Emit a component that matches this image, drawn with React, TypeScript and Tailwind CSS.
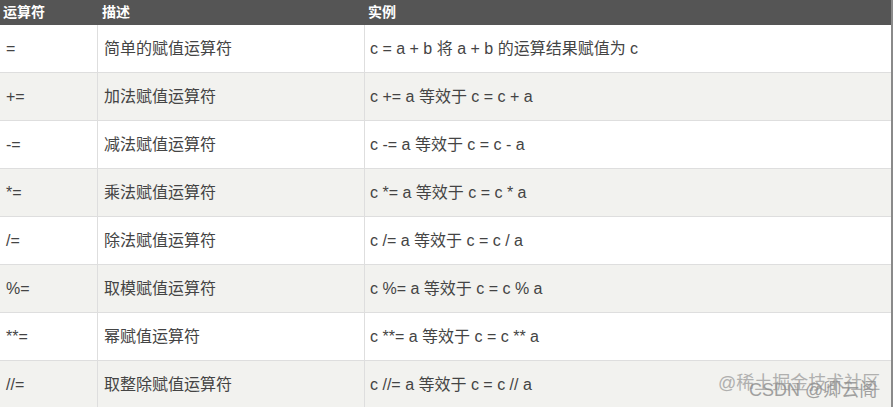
const rows = [
  { op: "=", desc: "简单的赋值运算符", ex: "c = a + b 将 a + b 的运算结果赋值为 c" },
  { op: "+=", desc: "加法赋值运算符", ex: "c += a 等效于 c = c + a" },
  { op: "-=", desc: "减法赋值运算符", ex: "c -= a 等效于 c = c - a" },
  { op: "*=", desc: "乘法赋值运算符", ex: "c *= a 等效于 c = c * a" },
  { op: "/=", desc: "除法赋值运算符", ex: "c /= a 等效于 c = c / a" },
  { op: "%=", desc: "取模赋值运算符", ex: "c %= a 等效于 c = c % a" },
  { op: "**=", desc: "幂赋值运算符", ex: "c **= a 等效于 c = c ** a" },
  { op: "//=", desc: "取整除赋值运算符", ex: "c //= a 等效于 c = c // a" },
];

const App = () => {
  return (
    <div className="relative w-[893px] h-[407px] overflow-hidden bg-white font-['Liberation_Sans','Noto_Sans_CJK_SC',sans-serif]">
      <div className="h-[407px] border-r-2 border-b-2 border-[#8a8a8a]">
        {/* Header */}
        <div className="grid grid-cols-[98px_267px_1fr] h-[25px] bg-[#555555] text-white font-bold text-[14px] items-center">
          <div className="pl-[3px]">运算符</div>
          <div className="pl-[4px]">描述</div>
          <div className="pl-[3px]">实例</div>
        </div>

        {/* Rows */}
        {rows.map((row, idx) => (
          <div
            key={idx}
            className={
              idx % 2 === 0
                ? "grid grid-cols-[98px_267px_1fr] h-[48px] bg-white border-b border-[#dedede] text-[16px] text-[#444444]"
                : "grid grid-cols-[98px_267px_1fr] h-[48px] bg-[#f2f2ef] border-b border-[#dedede] text-[16px] text-[#444444]"
            }
          >
            <div className="flex items-center pl-[6px] border-r border-[#dedede]">
              {row.op}
            </div>
            <div className="flex items-center pl-[6px] border-r border-[#dedede]">
              {row.desc}
            </div>
            <div className="flex items-center pl-[5px]">{row.ex}</div>
          </div>
        ))}
      </div>

      {/* Watermarks */}
      <div className="absolute left-[718px] top-[370px] text-[18px] text-[#a0a0a0] opacity-80 whitespace-nowrap">
        @稀土掘金技术社区
      </div>
      <div className="absolute left-[749px] top-[377px] text-[18px] text-[#8c8c8c] opacity-80 whitespace-nowrap">
        CSDN @卿云阁
      </div>
    </div>
  );
};

export default App;
